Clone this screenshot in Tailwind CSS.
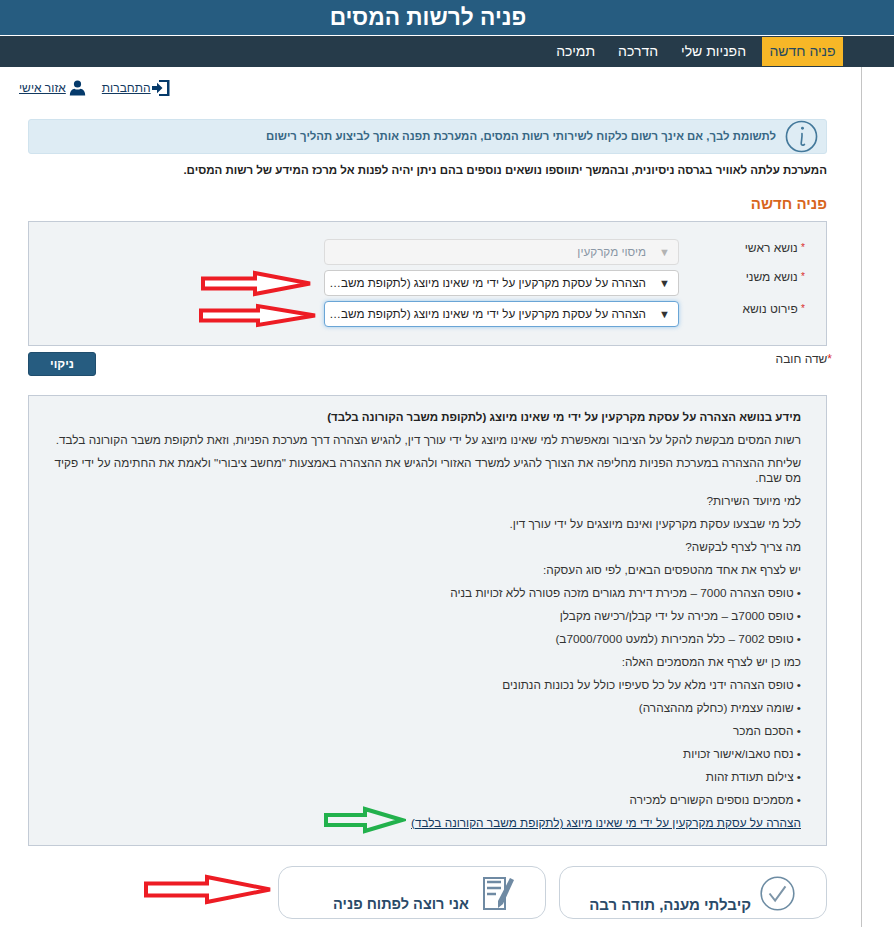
<!DOCTYPE html>
<html lang="he" dir="rtl">
<head>
    <meta charset="UTF-8">
    <title>פניה לרשות המסים</title>
    <script src="https://cdn.jsdelivr.net/npm/@tailwindcss/browser@4"></script>
</head>
<body class="bg-white text-[#222] font-['Liberation_Sans',Arial,sans-serif] h-[927px] overflow-hidden relative">

    <!-- Header -->
    <header class="h-9 bg-[#265c80] border-b border-white flex items-center justify-center pr-[38px]">
        <h1 class="text-[22.7px] font-bold text-white leading-none">פניה לרשות המסים</h1>
    </header>

    <!-- Nav -->
    <nav class="h-[31px] bg-[#263b4a] flex items-start pr-[51px] pt-px text-[14px]">
        <a class="h-[29px] w-[81px] bg-[#f7b727] text-[#264a5f] flex items-center justify-center">פניה חדשה</a>
        <a class="h-[29px] mr-4 text-white flex items-center">הפניות שלי</a>
        <a class="h-[29px] mr-[23px] text-white flex items-center">הדרכה</a>
        <a class="h-[29px] mr-[23px] text-white flex items-center">תמיכה</a>
    </nav>

    <main class="w-[862px] h-[860px] mr-auto border-r border-[#c4c4c4]">
        <!-- User links -->
        <div class="flex justify-start h-[52px] pt-[13px] pl-[19px] text-[12px] text-[#12395f]" dir="ltr">
            <a class="flex items-start gap-[3px] underline">
                <span class="leading-[16px]" dir="rtl">אזור אישי</span>
                <svg class="w-[17px] h-[16px] mr-4" viewBox="0 0 17 16" fill="#053a6b"><circle cx="8.5" cy="4" r="3.6"/><path d="M0.8 15.5c0-4 1.5-6 4.5-6.8 2 1.2 4.400 1.200 6.400 0 3 .8 4.500 2.800 4.500 6.800z"/></svg>
            </a>
            <a class="flex items-start gap-[1px] underline">
                <span class="leading-[16px]" dir="rtl">התחברות</span>
                <svg class="w-[18px] h-[18px] -mt-px" viewBox="0 0 18 18" fill="#053a6b"><path d="M7 1h10.500v16H7v-2h8V3H7z"/><path d="M0 7h5V3.800L10.500 9 5 14.200V11H0z"/></svg>
            </a>
        </div>

        <div class="pl-[28px] pr-[34px]">
            <!-- Notice -->
            <div class="h-[35px] bg-[#deecf4] border border-[#d0e3ee] rounded-[3px] flex items-center text-[#376784] text-[11.4px] font-bold">
                <svg class="w-[33px] h-[33px] shrink-0 mr-[8px] ml-[9px]" viewBox="0 0 34 34" fill="none" stroke="#44799b" stroke-width="1.700"><circle cx="17" cy="17" r="15.500"/><circle cx="18" cy="8.500" r="1.500" fill="#44799b" stroke="none"/><path d="M17.500 14c.4 3-.6 7-.8 10-.1 2 1.300 2.500 3.300 1.200" stroke-linecap="round"/></svg>
                <span>לתשומת לבך, אם אינך רשום כלקוח לשירותי רשות המסים, המערכת תפנה אותך לביצוע תהליך רישום</span>
            </div>
            <p class="mt-[8px] text-[11.5px] leading-[16px] font-bold text-[#222]">המערכת עלתה לאוויר בגרסה ניסיונית, ובהמשך יתווספו נושאים נוספים בהם ניתן יהיה לפנות אל מרכז המידע של רשות המסים.</p>

            <h2 class="mt-[16px] text-[15px] leading-[20px] font-bold text-[#d8651c]">פניה חדשה</h2>

            <!-- Form panel -->
            <section class="mt-[7px] h-[125px] bg-[#f0f3f5] border border-[#c3cbd6] pt-[17px]">
                <div class="flex flex-col gap-[5px] text-[11.7px]">
                    <div class="flex items-start">
                        <label class="w-[126px] mr-[21px] mt-px text-[12px] text-[#333] leading-[16px]"><span class="text-[#d92b2b] align-top text-[10px]">*</span> נושא ראשי</label>
                        <div class="w-[355px] h-[26px] bg-[#f5f5f5] border border-[#dcdcdc] rounded-[4px] flex items-center text-[#8a97a5]">
                            <span class="w-[27px] text-center text-[#b3b3b3] text-[11px]">▼</span>
                            <span class="truncate flex-1 pr-[5px] pl-[3px]">מיסוי מקרקעין</span>
                        </div>
                    </div>
                    <div class="flex items-start">
                        <label class="w-[126px] mr-[21px] -mt-px text-[12px] text-[#333] leading-[16px]"><span class="text-[#d92b2b] align-top text-[10px]">*</span> נושא משני</label>
                        <div class="w-[355px] h-[26px] bg-white border border-[#ccc] rounded-[4px] flex items-center text-[#222]">
                            <span class="w-[27px] text-center text-[#333] text-[11px]">▼</span>
                            <span class="truncate flex-1 pr-[5px] pl-[3px]">הצהרה על עסקת מקרקעין על ידי מי שאינו מיוצג (לתקופת משבר הקורונה בלבד)</span>
                        </div>
                    </div>
                    <div class="flex items-start">
                        <label class="w-[126px] mr-[21px] text-[12px] text-[#333] leading-[16px]"><span class="text-[#d92b2b] align-top text-[10px]">*</span> פירוט נושא</label>
                        <div class="w-[355px] h-[26px] bg-white border border-[#6aa5d6] rounded-[4px] shadow-[0_0_4px_rgba(102,175,233,0.6)] flex items-center text-[#222]">
                            <span class="w-[27px] text-center text-[#333] text-[11px]">▼</span>
                            <span class="truncate flex-1 pr-[5px] pl-[3px]">הצהרה על עסקת מקרקעין על ידי מי שאינו מיוצג (לתקופת משבר הקורונה בלבד)</span>
                        </div>
                    </div>
                </div>
            </section>

            <!-- Required + clear -->
            <div class="flex justify-between items-start h-[49px] pt-[6px] -mr-[5px]">
                <span class="text-[12px] leading-[14px] text-[#333]"><span class="text-[#d92b2b]">*</span>שדה חובה</span>
                <button class="w-[68px] h-[24px] bg-[#265c80] border border-[#1f4d6d] rounded-[3px] text-white text-[12px] font-bold">ניקוי</button>
            </div>

            <!-- Info panel -->
            <section class="h-[451px] bg-[#f0f3f5] border border-[#c3cbd6] pt-[14px] pr-[25px] pl-[25px] text-[11.8px] leading-[15px] text-[#333] flex flex-col gap-[8px]">
                <p class="font-bold text-[11.5px] text-[#222]">מידע בנושא הצהרה על עסקת מקרקעין על ידי מי שאינו מיוצג (לתקופת משבר הקורונה בלבד)</p>
                <p>רשות המסים מבקשת להקל על הציבור ומאפשרת למי שאינו מיוצג על ידי עורך דין, להגיש הצהרה דרך מערכת הפניות, וזאת לתקופת משבר הקורונה בלבד.</p>
                <p>שליחת ההצהרה במערכת הפניות מחליפה את הצורך להגיע למשרד האזורי ולהגיש את ההצהרה באמצעות "מחשב ציבורי" ולאמת את החתימה על ידי פקיד מס שבח.</p>
                <p>למי מיועד השירות?</p>
                <p>לכל מי שבצעו עסקת מקרקעין ואינם מיוצגים על ידי עורך דין.</p>
                <p>מה צריך לצרף לבקשה?</p>
                <p>יש לצרף את אחד מהטפסים הבאים, לפי סוג העסקה:</p>
                <p>• טופס הצהרה 7000 – מכירת דירת מגורים מזכה פטורה ללא זכויות בניה</p>
                <p>• טופס 7000ב – מכירה על ידי קבלן/רכישה מקבלן</p>
                <p>• טופס 7002 – כלל המכירות (למעט 7000/7000ב)</p>
                <p>כמו כן יש לצרף את המסמכים האלה:</p>
                <p>• טופס הצהרה ידני מלא על כל סעיפיו כולל על נכונות הנתונים</p>
                <p>• שומה עצמית (כחלק מההצהרה)</p>
                <p>• הסכם המכר</p>
                <p>• נסח טאבו/אישור זכויות</p>
                <p>• צילום תעודת זהות</p>
                <p>• מסמכים נוספים הקשורים למכירה</p>
                <p><a class="underline text-[#12395f]">הצהרה על עסקת מקרקעין על ידי מי שאינו מיוצג (לתקופת משבר הקורונה בלבד)</a></p>
            </section>

            <!-- Action buttons -->
            <div class="mt-[20px] flex gap-[13px]">
                <button class="w-[268px] h-[53px] bg-white border border-[#c9d2db] rounded-[14px] flex items-start pt-[9px] pr-[31px] gap-[9px] text-[15px] font-bold text-[#2a4a68]">
                    <svg class="w-[35px] h-[35px] shrink-0" viewBox="0 0 44 44" fill="none"><circle cx="22" cy="22" r="20.500" stroke="#6d8ca3" stroke-width="2"/><path d="M12 22l7 9 13-18" stroke="#7d95a8" stroke-width="2.500"/></svg>
                    <span class="leading-[20px] mt-[19px]">קיבלתי מענה, תודה רבה</span>
                </button>
                <button class="w-[268px] h-[53px] bg-white border border-[#c9d2db] rounded-[14px] flex items-start pt-[10px] pr-[30px] gap-[14px] text-[14.5px] font-bold text-[#2a4a68]">
                    <svg class="w-[32px] h-[33px] shrink-0" viewBox="0 0 32 33" fill="none"><path d="M1 1h21v31H1z" stroke="#6f8aa3" stroke-width="2" fill="#fff"/><path d="M4 5h14M4 11h14M4 17h9" stroke="#6f8aa3" stroke-width="2.500"/><path d="M27 1l4 2-11 24-5 4 0-7z" fill="#6f8aa3"/></svg>
                    <span class="leading-[20px] mt-[17px]">אני רוצה לפתוח פניה</span>
                </button>
            </div>
        </div>
    </main>

    <!-- Annotation arrows -->
    <svg class="absolute left-[200px] top-[270px] w-[115px] h-[27px]" viewBox="0 0 115 27" fill="#fff" stroke="#ed1c24" stroke-width="4"><path d="M3 8.500H55V3L110 13.500 55 24V18.500H3z"/></svg>
    <svg class="absolute left-[198px] top-[303px] w-[121px] h-[25px]" viewBox="0 0 121 25" fill="#fff" stroke="#ed1c24" stroke-width="4"><path d="M3 7.500H60V3L117 12.500 60 22V17.500H3z"/></svg>
    <svg class="absolute left-[323px] top-[806px] w-[83px] h-[28px]" viewBox="0 0 83 28" fill="#f0f3f5" stroke="#22b14c" stroke-width="4"><path d="M3 9H42V3L79 14 42 25V19H3z"/></svg>
    <svg class="absolute left-[143px] top-[874px] w-[131px] h-[31px]" viewBox="0 0 131 31" fill="#fff" stroke="#ed1c24" stroke-width="4"><path d="M3 9.500H64V3L127 15.500 64 28V21.500H3z"/></svg>
</body>
</html>
